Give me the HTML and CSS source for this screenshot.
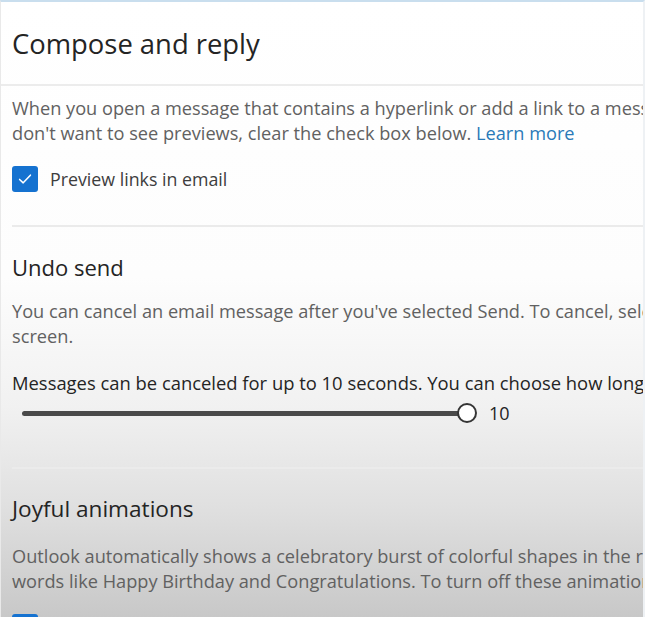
FILE: index.html
```html
<!DOCTYPE html>
<html lang="en">
<head>
<meta charset="utf-8">
<title>Compose and reply</title>
<link rel="stylesheet" href="styles.css">
</head>
<body>
<div class="page">
  <header class="header">
    <h1 class="title">Compose and reply</h1>
  </header>
  <main class="content">
    <section class="section first">
      <p class="desc">When you open a message that contains a hyperlink or add a link to a message, Outlook will show a preview of the link. If you<br>don't want to see previews, clear the check box below. <a class="link" href="#">Learn more</a></p>
      <label class="check-row">
        <span class="checkbox checked">
          <svg viewBox="0 0 16 16" width="16" height="16"><path d="M3.2 8.4 L6.4 11.4 L12.8 4.6" fill="none" stroke="#fff" stroke-width="1.4" stroke-linecap="round" stroke-linejoin="round"/></svg>
        </span>
        <span class="check-label">Preview links in email</span>
      </label>
    </section>
    <section class="section">
      <h2 class="heading">Undo send</h2>
      <p class="desc">You can cancel an email message after you've selected Send. To cancel, select Undo at the bottom of the<br>screen.</p>
      <p class="note">Messages can be canceled for up to 10 seconds. You can choose how long Outlook waits before sending.</p>
      <div class="slider-row">
        <div class="slider">
          <div class="track"></div>
          <div class="thumb"></div>
        </div>
        <span class="slider-value">10</span>
      </div>
    </section>
    <section class="section last">
      <h2 class="heading">Joyful animations</h2>
      <p class="desc">Outlook automatically shows a celebratory burst of colorful shapes in the reading pane when you receive an email with<br>words like Happy Birthday and Congratulations. To turn off these animations, clear the check box below.</p>
      <label class="check-row">
        <span class="checkbox checked">
          <svg viewBox="0 0 16 16" width="16" height="16"><path d="M3.2 8.4 L6.4 11.4 L12.8 4.6" fill="none" stroke="#fff" stroke-width="1.4" stroke-linecap="round" stroke-linejoin="round"/></svg>
        </span>
        <span class="check-label">Show joyful animations</span>
      </label>
    </section>
  </main>
</div>
</body>
</html>
```

FILE: styles.css
```css
* { box-sizing: border-box; }
html, body { margin: 0; padding: 0; height: 100%; overflow: hidden; }
body {
  font-family: "Open Sans", "Segoe UI", "Noto Sans", sans-serif;
  color: #242424;
  background: linear-gradient(180deg, #ffffff 0%, #fdfdfd 45%, #f1f1f1 66%, #e0e0e0 82%, #c8c8c8 100%);
}
.page {
  width: 645px;
  height: 617px;
  border-top: 2px solid #c9deee;
  border-left: 1px solid #e9e9e9;
  border-right: 2px solid #eef1f4;
  overflow: hidden;
}
.header {
  height: 84px;
  display: flex;
  align-items: center;
  padding-left: 11px;
  border-bottom: 2px solid #ececec;
}
.title {
  margin: 0;
  font-size: 27.4px;
  font-weight: 400;
  color: #242424;
  white-space: nowrap;
}
.content { padding: 0 0 0 11px; }
.section {
  border-bottom: 2px solid #ebebeb;
  padding-top: 25px;
}
.section.first { padding-top: 10px; padding-bottom: 33px; }
.section.last { border-bottom: none; }
.desc {
  margin: 0;
  font-size: 18.2px;
  line-height: 25px;
  color: #616161;
  white-space: nowrap;
}
.link { color: #2a7ab8; text-decoration: none; }
.check-row {
  display: flex;
  align-items: center;
  gap: 12px;
  margin-top: 20px;
}
.checkbox {
  width: 26px;
  height: 26px;
  border-radius: 3px;
  background: #1572d0;
  display: flex;
  align-items: center;
  justify-content: center;
  flex: none;
}
.checkbox svg { width: 18px; height: 18px; }
.check-label { font-size: 17.8px; color: #3d3d3d; white-space: nowrap; }
.heading {
  margin: 0 0 17px;
  font-size: 22px;
  font-weight: 400;
  line-height: 30px;
  color: #242424;
  white-space: nowrap;
}
.note {
  margin: 21px 0 0;
  font-size: 18.4px;
  line-height: 25px;
  color: #242424;
  white-space: nowrap;
}
.slider-row {
  display: flex;
  align-items: center;
  height: 20px;
  margin-top: 8px;
  margin-bottom: 44px;
}
.slider {
  position: relative;
  width: 455px;
  height: 20px;
  margin-left: 10px;
}
.track {
  position: absolute;
  left: 0;
  right: 9px;
  top: 8px;
  height: 5px;
  border-radius: 2.5px;
  background: #4a4a4a;
}
.thumb {
  position: absolute;
  right: 0;
  top: 0;
  width: 20px;
  height: 20px;
  border-radius: 50%;
  border: 2px solid #353535;
  background: #ffffff;
}
.slider-value {
  margin-left: 12px;
  font-size: 18px;
  color: #242424;
}
.last .heading { font-size: 22.6px; margin-bottom: 20px; }
.last .desc { margin-top: 3px; }
```
